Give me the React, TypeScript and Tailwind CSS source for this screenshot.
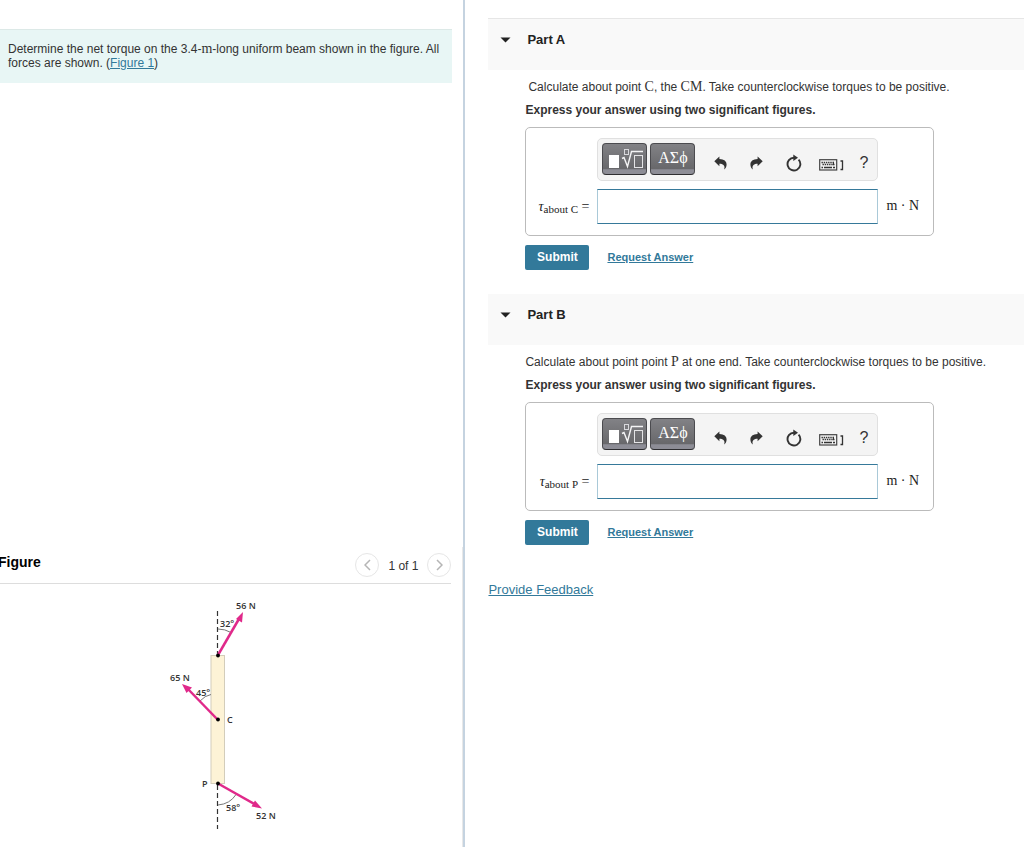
import React from 'react';

const PARTS = [
    {
        id: "a",
        title: "Part A",
        point: "C",
        header: "h-[52px] border-t border-[#e6e6e6]",
        question: <p className="pl-[3px]">Calculate about point <MathText>C</MathText>, the <MathText>CM</MathText>. Take counterclockwise torques to be positive.</p>,
    },
    {
        id: "b",
        title: "Part B",
        point: "P",
        header: "mt-6 h-[51px]",
        question: <p>Calculate about point point <MathText>P</MathText> at one end. Take counterclockwise torques to be positive.</p>,
    },
];

function MathText({children}: { children: React.ReactNode }) {
    return <span className="font-['Liberation_Serif',serif] text-[14px] leading-none">{children}</span>;
}

const TemplateIcon = () => (
    <svg width="36" height="22" viewBox="0 0 36 22" fill="none" aria-hidden="true">
        <rect x="2" y="7" width="10" height="13" fill="#fff"/>
        <rect x="17.500" y="1.500" width="4" height="5" stroke="#d8d8dc"/>
        <path d="M15 10.500L17 9.500L20.500 18.500L24.500 3.500H36" stroke="#f4f4f5" strokeWidth="1.400"/>
        <rect x="27.500" y="7.500" width="8" height="12" stroke="#e4e4e6"/>
    </svg>
);

const UndoIcon = () => (
    <svg width="13" height="14" viewBox="0 0 13 14" fill="#333" aria-hidden="true">
        <path d="M0.300 5.200L5.400 0.500V3C10 3.200 12.700 5.200 12.600 8.700C12.500 11 11.500 12.600 10 13.600C10.800 11.700 10.700 10 9.500 8.900C8.500 8 7.300 7.700 5.400 7.700V10.200Z"/>
    </svg>
);

const RedoIcon = () => (
    <svg width="13" height="14" viewBox="0 0 13 14" fill="#333" aria-hidden="true">
        <path d="M12.700 5.200L7.600 0.500V3C3 3.200 0.300 5.200 0.400 8.700C0.500 11 1.500 12.600 3 13.600C2.200 11.700 2.300 10 3.500 8.900C4.500 8 5.700 7.700 7.600 7.700V10.200Z"/>
    </svg>
);

const ResetIcon = () => (
    <svg width="16" height="18" viewBox="0 0 16 18" fill="none" aria-hidden="true">
        <path d="M12.600 5.700A6.400 6.400 0 1 1 8 3.700" stroke="#333" strokeWidth="1.900"/>
        <path d="M7.300 0.500L12 3.700L7.300 7Z" fill="#333"/>
    </svg>
);

const KeyboardIcon = () => (
    <svg width="26" height="12" viewBox="0 0 26 12" fill="none" aria-hidden="true">
        <rect x="0.700" y="0.700" width="17" height="10.300" stroke="#444" strokeWidth="1.200"/>
        <path d="M2.500 3.500H14.500M3.500 5.500H15.500" stroke="#333" strokeWidth="1.400" strokeDasharray="1.400 0.800"/>
        <path d="M14.500 2.800V6.200" stroke="#333"/>
        <path d="M2.500 8.500H4M5 8.500H13M14 8.500H16" stroke="#333" strokeWidth="1.400"/>
        <path d="M21.500 2H23.500V10.500H21.500" stroke="#333" strokeWidth="1.300"/>
    </svg>
);

const Chevron = ({d}: { d: string }) => (
    <svg width="7" height="12" viewBox="0 0 7 12" fill="none" stroke="#b5b5b5" strokeWidth="1.500" aria-hidden="true">
        <path d={d}/>
    </svg>
);

const Toolbar = () => {
    const dark = "flex h-8 w-[45px] justify-center rounded-[4px] border border-[#4b4b4f] border-b-[#2d2d30] bg-linear-to-b from-[#828286] from-0% via-[#68686b] via-82% to-[#8d8d96] to-86% text-white";
    return (
        <div className="flex h-[43px] items-start rounded-[5px] border border-[#e0e0e0] bg-[#f4f4f4] px-1 pt-1">
            <div className="flex gap-[3px]">
                <button type="button" aria-label="Templates" className={`${dark} pt-1`}><TemplateIcon/></button>
                <button type="button" aria-label="Symbols" className={`${dark} pt-[5px] font-['Liberation_Serif',serif] text-[16px] leading-[18px]`}>ΑΣϕ</button>
            </div>
            <div className="flex flex-1 items-center pt-[10px] pl-[19px]">
                <div className="flex items-center gap-[23px]">
                    <button type="button" aria-label="Undo"><UndoIcon/></button>
                    <button type="button" aria-label="Redo"><RedoIcon/></button>
                    <button type="button" aria-label="Reset"><ResetIcon/></button>
                </div>
                <button type="button" aria-label="Keyboard shortcuts" className="ml-[17px] pt-1"><KeyboardIcon/></button>
                <button type="button" aria-label="Help" className="ml-[14px] text-[16px] leading-5 text-[#333]">?</button>
            </div>
        </div>
    );
};

const Part = ({part}: { part: typeof PARTS[number] }) => (
    <section>
        <div className={`bg-[#f9f9f9] pt-3 pl-3 ${part.header}`}>
            <button type="button" className="flex items-center text-[13px] leading-[18px] font-bold text-[#222]">
                <svg width="11" height="6" viewBox="0 0 11 6" fill="#222" className="mr-4" aria-hidden="true"><path d="M0.500 0.500H10.500L5.500 5.500Z"/></svg>
                {part.title}
            </button>
        </div>
        <div className="pt-2 pr-4 pl-[37px] text-[12px] leading-[18px]">
            {part.question}
            <p className="mt-[5px] font-bold">Express your answer using two significant figures.</p>
            <div className="mt-2 grid w-[409px] max-w-full grid-cols-[63px_281px_1fr] items-center gap-x-2 gap-y-2 rounded-[5px] border border-[#bbb] pt-[10px] pb-[11px]">
                <div className="col-start-2"><Toolbar/></div>
                <label htmlFor={`answer-${part.id}`} className="col-start-1 text-right font-['Liberation_Serif',serif] text-[14px] whitespace-nowrap text-[#222]">
                    <i>τ</i><sub className="text-[11px]">about {part.point}</sub> =
                </label>
                <input id={`answer-${part.id}`} type="text" className="h-[35px] w-full border border-x-[#a9c9d8] border-y-[#36799a] bg-white px-2 text-[14px] outline-none"/>
                <span className="pb-[2px] font-['Liberation_Serif',serif] text-[14px] text-[#222]">m · N</span>
            </div>
            <div className="mt-[9px] flex items-center gap-[18px]">
                <button type="button" className="h-[25px] w-16 rounded-[2px] bg-[#32799a] pb-[2px] text-[12px] font-bold text-white">Submit</button>
                <a href="#" className="pb-[2px] text-[11px] font-bold text-[#32799a] underline">Request Answer</a>
            </div>
        </div>
    </section>
);

const BeamFigure = () => (
    <svg width="130" height="240" viewBox="160 595 130 240" className="ml-[160px]" role="img" aria-label="Uniform beam with three forces">
        <rect x="211" y="655.500" width="13.500" height="128" fill="#fdf3d6" stroke="#d3cdbb"/>
        <g stroke="#333" strokeWidth="1.200" strokeDasharray="5 3">
            <path d="M217.500 611V655"/>
            <path d="M217.500 785V829"/>
        </g>
        <g stroke="#777" fill="none">
            <path d="M218 629Q225 629 231 632.500"/>
            <path d="M200 701Q205 695.500 211 694.500"/>
            <path d="M218 805Q230 804 236 794.500"/>
        </g>
        <g stroke="#e0298a" strokeWidth="2.500">
            <path d="M218 655L239.500 618"/>
            <path d="M217.500 719.500L187 688"/>
            <path d="M218 783.500L256 805"/>
        </g>
        <g fill="#e0298a">
            <path d="M243 612L242 622.500L236 619Z"/>
            <path d="M182 684L192 687.500L186.500 693Z"/>
            <path d="M262 808.500L251.500 806.500L255 800.500Z"/>
        </g>
        <circle cx="218" cy="655.500" r="1.900"/>
        <circle cx="218" cy="719.500" r="1.900"/>
        <circle cx="218" cy="783.500" r="1.900"/>
        <g fill="#333" fontFamily="'Open Sans', sans-serif" fontSize="9" fontWeight="600">
            <text x="236" y="609">56 N</text>
            <text x="220" y="627">32°</text>
            <text x="170" y="681">65 N</text>
            <text x="196" y="696">45°</text>
            <text x="227" y="723">C</text>
            <text x="202" y="787">P</text>
            <text x="226" y="811">58°</text>
            <text x="256" y="819">52 N</text>
        </g>
    </svg>
);

const App = () => {
    return (
        <main className="grid min-h-screen grid-cols-[5fr_6fr] bg-white font-['Liberation_Sans',Arial,sans-serif] text-[#333]">
            <div className="flex flex-col justify-between overflow-hidden border-r-2 border-[#c5d3e0]">
                <div className="mt-[29px] mr-[11px] h-[54px] border-t border-[#dce9e7] bg-[#e8f6f5] py-3 pr-3 pl-2 text-[12px] leading-[14px]">
                    Determine the net torque on the 3.4-<MathText>m</MathText>-long uniform beam shown in the figure. All forces are shown. (<a href="#figure" className="text-[#32799a] underline">Figure 1</a>)
                </div>
                <section id="figure" className="border-r border-[#e8e8e8]">
                    <div className="mr-[11px] flex h-[37px] justify-between border-b border-[#ddd]">
                        <h2 className="-ml-[2px] pt-[5px] text-[14px] leading-5 font-bold text-black">Figure</h2>
                        <div className="flex h-[35px] items-center gap-[9px] text-[12px]">
                            <button type="button" aria-label="Previous figure" className="flex size-6 items-center justify-center rounded-full border border-[#e6e6e6]"><Chevron d="M6 1L1 6L6 11"/></button>
                            <span className="pt-[2px]">1 of 1</span>
                            <button type="button" aria-label="Next figure" className="flex size-6 items-center justify-center rounded-full border border-[#e6e6e6]"><Chevron d="M1 1L6 6L1 11"/></button>
                        </div>
                    </div>
                    <div className="pt-[11px] pb-3"><BeamFigure/></div>
                </section>
            </div>
            <div className="pt-[18px] pl-[23px]">
                {PARTS.map((part) => <Part key={part.id} part={part}/>)}
                <a href="#" className="mt-9 inline-block text-[13px] leading-[18px] text-[#32799a] underline">Provide Feedback</a>
            </div>
        </main>
    );
};

export default App;
